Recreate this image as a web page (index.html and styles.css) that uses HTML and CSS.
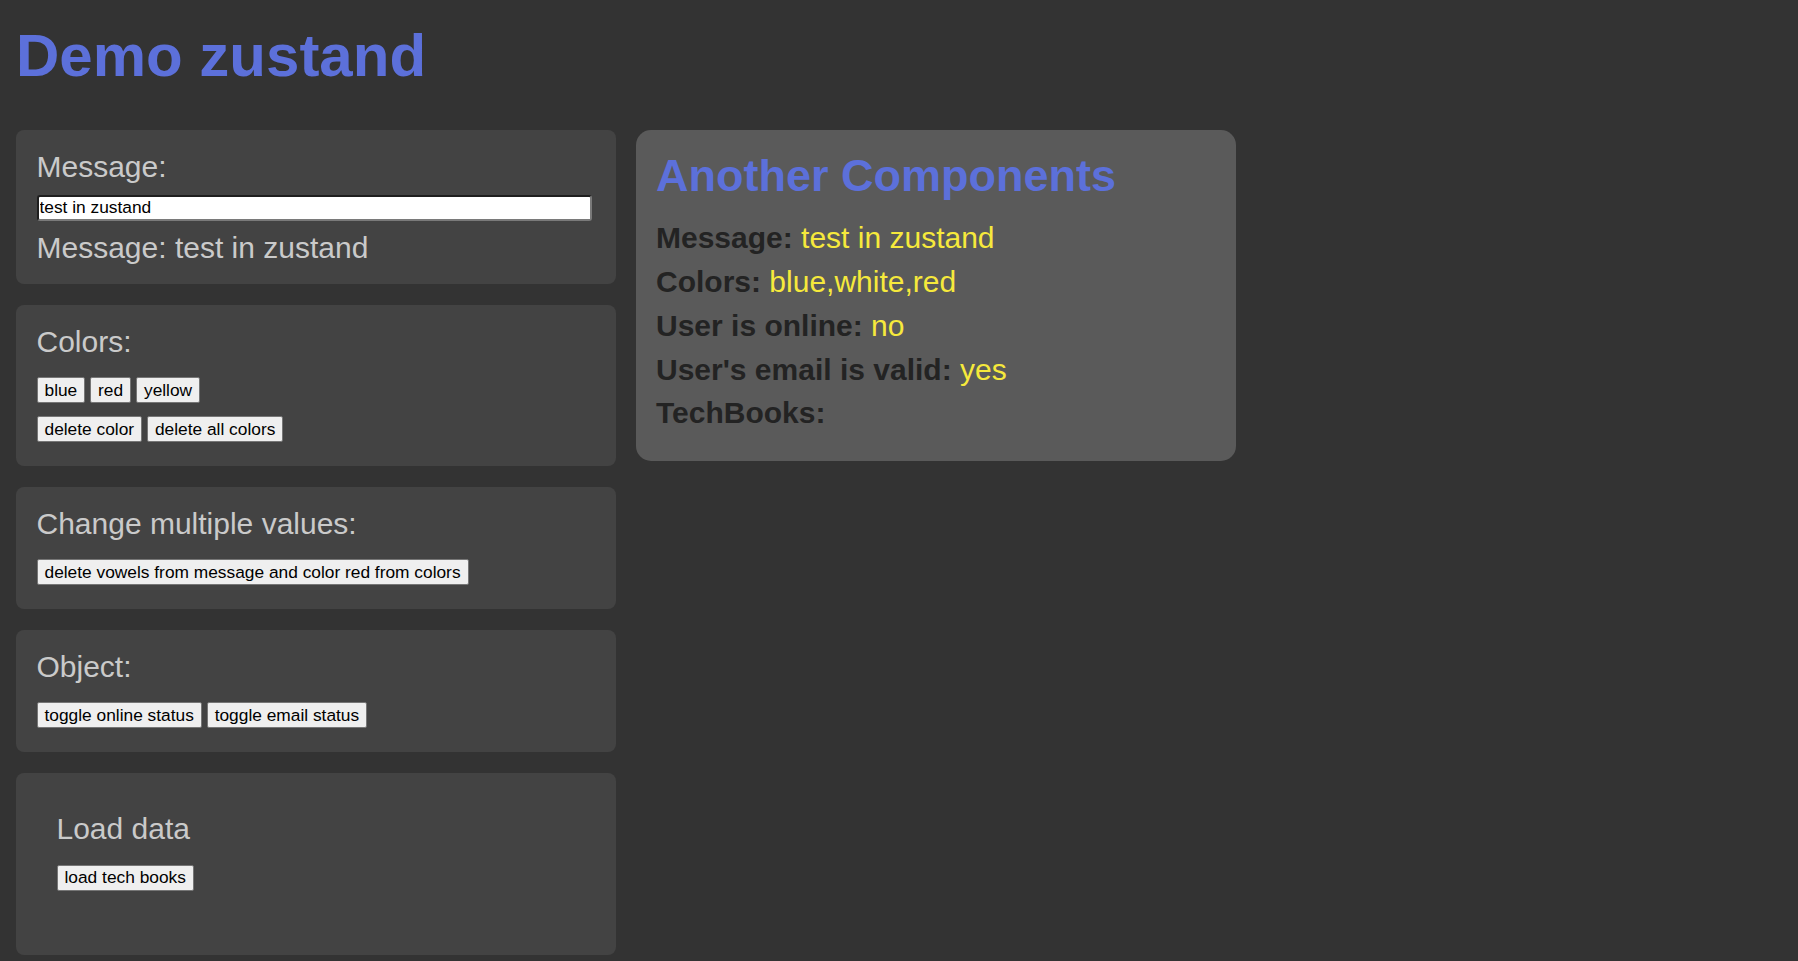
FILE: index.html
```html
<!DOCTYPE html>
<html lang="en">
<head>
<meta charset="utf-8">
<title>Demo zustand</title>
<link rel="stylesheet" href="styles.css">
</head>
<body>
<h1 class="page-title">Demo zustand</h1>
<div class="layout">
  <div class="column">
    <section class="card card-message">
      <p class="label">Message:</p>
      <input class="text-input" type="text" value="test in zustand">
      <p class="label result">Message: test in zustand</p>
    </section>
    <section class="card">
      <p class="label">Colors:</p>
      <div class="btn-row">
        <button class="btn">blue</button> <button class="btn">red</button> <button class="btn">yellow</button>
      </div>
      <div class="btn-row second">
        <button class="btn">delete color</button> <button class="btn">delete all colors</button>
      </div>
    </section>
    <section class="card">
      <p class="label">Change multiple values:</p>
      <div class="btn-row">
        <button class="btn">delete vowels from message and color red from colors</button>
      </div>
    </section>
    <section class="card">
      <p class="label">Object:</p>
      <div class="btn-row">
        <button class="btn">toggle online status</button> <button class="btn">toggle email status</button>
      </div>
    </section>
    <section class="card">
      <div class="inner">
        <p class="label">Load data</p>
        <div class="btn-row">
          <button class="btn">load tech books</button>
        </div>
      </div>
    </section>
  </div>
  <div class="column">
    <section class="card-alt">
      <h2 class="alt-title">Another Components</h2>
      <p class="info"><b>Message:</b> <span class="val">test in zustand</span></p>
      <p class="info"><b>Colors:</b> <span class="val">blue,white,red</span></p>
      <p class="info"><b>User is online:</b> <span class="val">no</span></p>
      <p class="info"><b>User's email is valid:</b> <span class="val">yes</span></p>
      <p class="info"><b>TechBooks:</b></p>
    </section>
  </div>
</div>
</body>
</html>
```
FILE: styles.css
```css
html, body {
  background: #333333;
}
body {
  margin: 0;
  padding: 21px 16px 0;
  font-family: "Liberation Sans", Arial, sans-serif;
}
.page-title {
  margin: 0 0 40px;
  font-size: 60px;
  line-height: 69px;
  font-weight: 700;
  color: #5c70da;
}
.layout {
  display: flex;
  gap: 20px;
  align-items: flex-start;
}
.column {
  width: 600px;
  display: flex;
  flex-direction: column;
  gap: 20.5px;
}
.card {
  background: #434343;
  border-radius: 8px;
  padding: 20px 24px 24px 20.5px;
}
.card-message {
  padding-bottom: 19px;
}
.label {
  margin: 0;
  font-size: 30px;
  line-height: 34.5px;
  color: #cacaca;
}
.text-input {
  display: block;
  box-sizing: border-box;
  width: 100%;
  height: 26px;
  margin: 10px 0;
  padding: 1px 1px;
  border: 2px solid;
  border-color: #1e1e1e #7a7a7a #7a7a7a #1e1e1e;
  border-radius: 3px;
  background: #ffffff;
  font-family: "Liberation Sans", Arial, sans-serif;
  font-size: 17.33px;
  color: #000000;
}
.btn-row {
  margin-top: 18px;
  font-size: 17.33px;
}
.btn-row.second {
  margin-top: 13px;
}
.btn {
  box-sizing: border-box;
  height: 26px;
  padding: 0 7px;
  border: 1px solid #767676;
  border-radius: 2px;
  background: #efefef;
  font-family: "Liberation Sans", Arial, sans-serif;
  font-size: 17.33px;
  color: #000000;
  vertical-align: top;
}
.inner {
  padding: 19.5px 20px 40.5px;
}
.card-alt {
  background: #5a5a5a;
  border-radius: 15px;
  padding: 20px 20px 30px;
  display: flex;
  flex-direction: column;
  gap: 9.3px;
}
.alt-title {
  margin: 0 0 10px;
  font-size: 45px;
  line-height: 52px;
  font-weight: 700;
  color: #5c70da;
}
.info {
  margin: 0;
  font-size: 30px;
  line-height: 34.5px;
  color: #f6e93c;
}
.info b {
  color: #232323;
}
```
